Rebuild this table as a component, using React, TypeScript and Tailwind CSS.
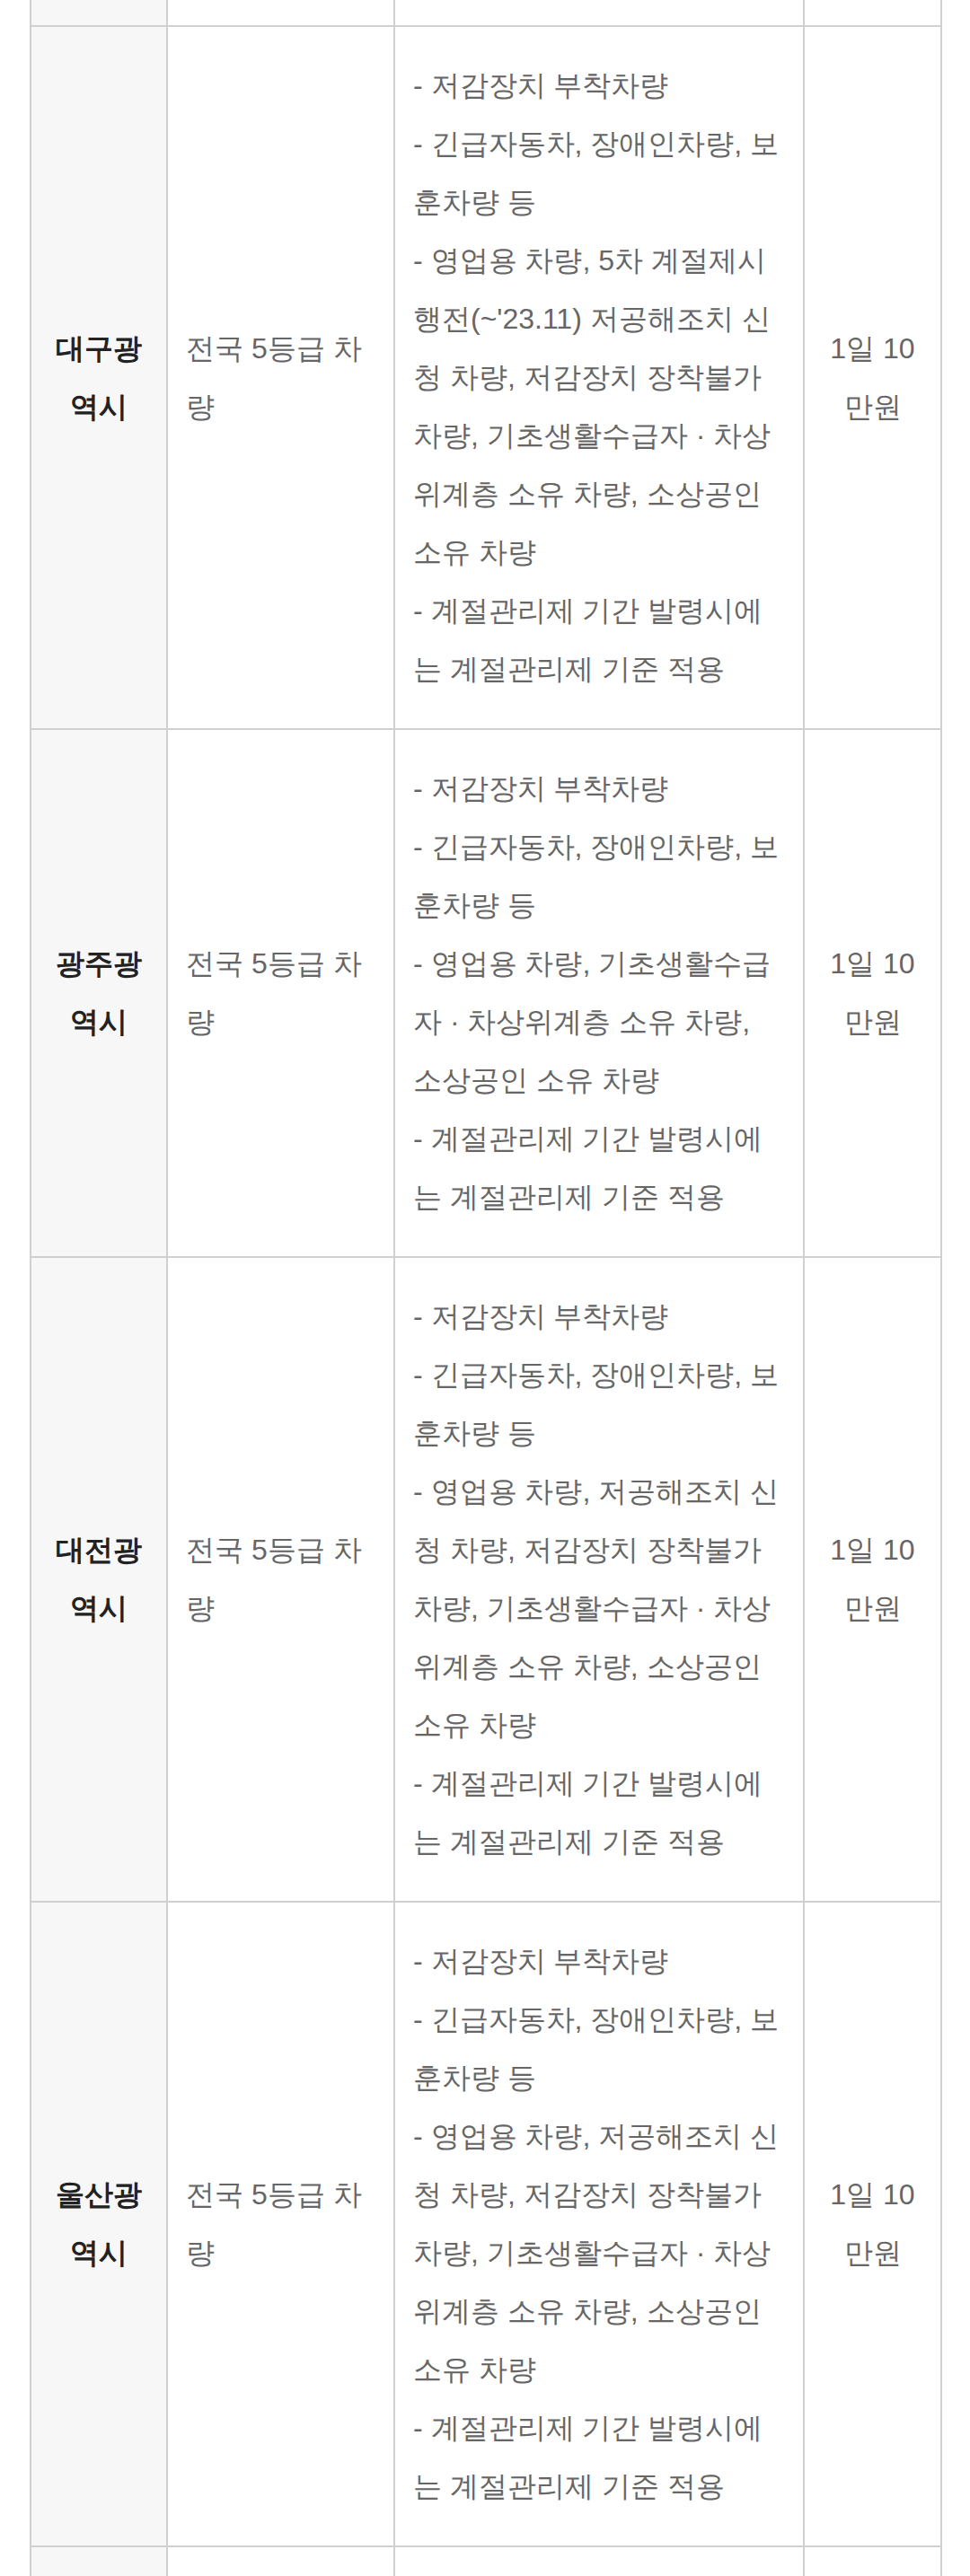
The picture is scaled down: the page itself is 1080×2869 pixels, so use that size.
import React from "react";

type Row = { city: string; target: string; items: string[]; fine: string };

const rows: Row[] = [
  {
    city: "대구광역시",
    target: "전국 5등급 차량",
    items: [
      "- 저감장치 부착차량",
      "- 긴급자동차, 장애인차량, 보훈차량 등",
      "- 영업용 차량, 5차 계절제시행전(~'23.11) 저공해조치 신청 차량, 저감장치 장착불가 차량, 기초생활수급자 · 차상위계층 소유 차량, 소상공인 소유 차량",
      "- 계절관리제 기간 발령시에는 계절관리제 기준 적용",
    ],
    fine: "1일 10 만원",
  },
  {
    city: "광주광역시",
    target: "전국 5등급 차량",
    items: [
      "- 저감장치 부착차량",
      "- 긴급자동차, 장애인차량, 보훈차량 등",
      "- 영업용 차량, 기초생활수급자 · 차상위계층 소유 차량, 소상공인 소유 차량",
      "- 계절관리제 기간 발령시에는 계절관리제 기준 적용",
    ],
    fine: "1일 10 만원",
  },
  {
    city: "대전광역시",
    target: "전국 5등급 차량",
    items: [
      "- 저감장치 부착차량",
      "- 긴급자동차, 장애인차량, 보훈차량 등",
      "- 영업용 차량, 저공해조치 신청 차량, 저감장치 장착불가 차량, 기초생활수급자 · 차상위계층 소유 차량, 소상공인 소유 차량",
      "- 계절관리제 기간 발령시에는 계절관리제 기준 적용",
    ],
    fine: "1일 10 만원",
  },
  {
    city: "울산광역시",
    target: "전국 5등급 차량",
    items: [
      "- 저감장치 부착차량",
      "- 긴급자동차, 장애인차량, 보훈차량 등",
      "- 영업용 차량, 저공해조치 신청 차량, 저감장치 장착불가 차량, 기초생활수급자 · 차상위계층 소유 차량, 소상공인 소유 차량",
      "- 계절관리제 기간 발령시에는 계절관리제 기준 적용",
    ],
    fine: "1일 10 만원",
  },
];

const cell = "border-2 border-[#d0d0d0] align-middle px-[20px] py-[33px]";

export default function App() {
  return (
    <div
      className="h-[2869px] w-[1080px] overflow-hidden bg-white"
      style={{ fontFamily: '"Liberation Sans", sans-serif' }}
    >
      <div className="-mt-[2px] pl-[33px]">
        <table className="table-fixed border-collapse w-[1014px] text-[32px] leading-[65px]">
          <colgroup>
            <col className="w-[152px]" />
            <col className="w-[253px]" />
            <col className="w-[456px]" />
            <col className="w-[153px]" />
          </colgroup>
          <tbody>
            <tr className="h-[31px]">
              <td className="border-2 border-t-0 border-[#d0d0d0] bg-[#f7f7f7]" />
              <td className="border-2 border-t-0 border-[#d0d0d0]" />
              <td className="border-2 border-t-0 border-[#d0d0d0]" />
              <td className="border-2 border-t-0 border-[#d0d0d0]" />
            </tr>
            {rows.map((r) => (
              <tr key={r.city}>
                <td className={`${cell} bg-[#f7f7f7] text-center font-bold text-[#222222]`}>{r.city}</td>
                <td className={`${cell} text-left text-[#666666]`}>{r.target}</td>
                <td className={`${cell} text-left text-[#666666]`}>
                  {r.items.map((it) => (
                    <div key={it}>{it}</div>
                  ))}
                </td>
                <td className={`${cell} text-center text-[#666666]`}>{r.fine}</td>
              </tr>
            ))}
            <tr className="h-[60px]">
              <td className="border-2 border-[#d0d0d0] bg-[#f7f7f7]" />
              <td className="border-2 border-[#d0d0d0]" />
              <td className="border-2 border-[#d0d0d0]" />
              <td className="border-2 border-[#d0d0d0]" />
            </tr>
          </tbody>
        </table>
      </div>
    </div>
  );
}
